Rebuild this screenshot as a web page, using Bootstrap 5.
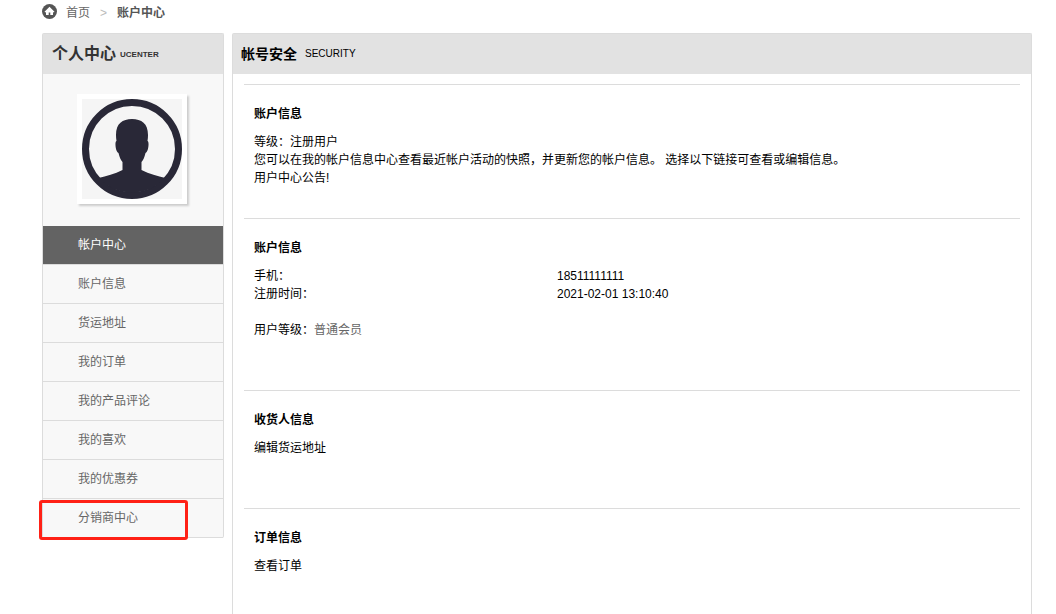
<!DOCTYPE html>
<html lang="zh-CN">
<head>
<meta charset="utf-8">
<meta name="viewport" content="width=device-width, initial-scale=1">
<title>账户中心</title>
<link href="https://cdn.jsdelivr.net/npm/bootstrap@5.3.0/dist/css/bootstrap.min.css" rel="stylesheet">
<style>
  :root { --line: #dcdcdc; --bar: #e2e2e2; --muted: #666; }
  body { font: 12px/18px "Liberation Sans", "Noto Sans CJK SC", sans-serif; color: #000; background: #fff; }
  a { color: var(--muted); text-decoration: none; }
  a:hover { text-decoration: underline; }
  .page { padding: 0 24px 0 42px; }
  .crumbs { height: 33px; padding-top: 4px; }
  .crumbs .breadcrumb { --bs-breadcrumb-divider-color: #bbb; --bs-breadcrumb-item-padding-x: 10px; --bs-breadcrumb-item-active-color: #555; margin-left: 9px; font-size: 12px; }
  .crumbs .breadcrumb-item::before { font-weight: 400; }
  .panel-bar { height: 41px; background: var(--bar); }
  .side { width: 182px; border: 1px solid var(--line); border-bottom: 0; border-radius: 2px; background: #f8f8f8; }
  .side .panel-bar { height: 40px; padding-left: 9px; color: #333; }
  .side h1 { font-size: 16px; line-height: 24px; }
  .side small { font-size: 8px; padding-top: 2px; }
  .avatar { width: 110px; height: 110px; margin: 20px 0 22px 34px; padding: 5px; background: #fff; box-shadow: 2px 2px 2px #ccc; }
  .menu a { height: 39px; padding-left: 35px; border-bottom: 1px solid var(--line); }
  .menu a.active { background: #636363; color: #fff; }
  .marked::after { content: ""; position: absolute; left: -4px; top: 1px; width: 149px; height: 40px; border: 3px solid #ff2116; border-radius: 3px; }
  .main-panel { border: 1px solid var(--line); border-bottom: 0; border-radius: 2px 2px 0 0; min-width: 0; }
  .main-panel .panel-bar { height: 40px; padding-left: 8px; }
  .main-panel h2 { font-size: 14px; line-height: 20px; }
  .main-panel .panel-bar span { font-size: 10px; }
  .blocks { padding: 10px 11px 0; }
  .block { border-top: 1px solid var(--line); padding: 20px 10px 51px; }
  .block.notice { padding-bottom: 31px; }
  .block:last-child { padding-bottom: 0; }
  .block h3 { font-size: 12px; line-height: 18px; margin-bottom: 10px; }
  .block p { margin: 0; }
  .facts { margin-bottom: 18px; }
  .facts th { width: 303px; padding: 0; font-weight: 400; }
  .facts td { padding: 0; }
</style>
</head>
<body>
<div class="page d-flex flex-column min-vh-100">
  <nav class="crumbs d-flex align-items-start" aria-label="breadcrumb">
    <svg class="flex-shrink-0" width="15" height="15" viewBox="0 0 15 15" aria-hidden="true">
      <circle cx="7.500" cy="7.500" r="7.500" fill="#555"/>
      <path d="M7.500 2.800 2.500 7.700l.8.8.7-.6V11h2.700V8.500h1.600V11H11V7.900l.7.6.8-.8Z" fill="#fff"/>
    </svg>
    <ol class="breadcrumb mb-0" style="--bs-breadcrumb-divider: '&gt;'">
      <li class="breadcrumb-item"><a href="#">首页</a></li>
      <li class="breadcrumb-item active fw-bold" aria-current="page">账户中心</li>
    </ol>
  </nav>

  <div class="d-flex flex-grow-1 gap-2">
    <aside class="side flex-shrink-0 align-self-start">
      <div class="panel-bar d-flex align-items-center gap-1">
        <h1 class="mb-0 fw-bold">个人中心</h1><small class="fw-bold">UCENTER</small>
      </div>
      <div class="avatar">
        <svg class="d-block" width="100" height="100" viewBox="0 0 100 100" role="img" aria-label="头像">
          <rect width="100" height="100" fill="#f5f5f5"/>
          <circle cx="50" cy="50" r="46.500" fill="none" stroke="#292837" stroke-width="7"/>
          <path d="M34.500 42C32 26 39 20 50 20s18 6 15.500 22c2 0 1 11-2 12-1 4-2 7-4 9v8c8 4 16 6 24 8a46 46 0 0 1-67 0c8-2 16-4 24-8v-8c-2-2-3-5-4-9-3-1-4-12-2-12Z" fill="#292837"/>
        </svg>
      </div>
      <nav class="menu d-flex flex-column">
        <a class="active d-flex align-items-center" aria-current="page" href="#">帐户中心</a>
        <a class="d-flex align-items-center" href="#">账户信息</a>
        <a class="d-flex align-items-center" href="#">货运地址</a>
        <a class="d-flex align-items-center" href="#">我的订单</a>
        <a class="d-flex align-items-center" href="#">我的产品评论</a>
        <a class="d-flex align-items-center" href="#">我的喜欢</a>
        <a class="d-flex align-items-center" href="#">我的优惠券</a>
        <a class="marked d-flex align-items-center position-relative" href="#">分销商中心</a>
      </nav>
    </aside>

    <main class="main-panel flex-grow-1">
      <div class="panel-bar d-flex align-items-center gap-2">
        <h2 class="mb-0 fw-bold">帐号安全</h2><span>SECURITY</span>
      </div>
      <div class="blocks">
        <section class="block notice">
          <h3 class="fw-bold">账户信息</h3>
          <p>等级：注册用户</p>
          <p>您可以在我的帐户信息中心查看最近帐户活动的快照，并更新您的帐户信息。 选择以下链接可查看或编辑信息。</p>
          <p>用户中心公告!</p>
        </section>
        <section class="block">
          <h3 class="fw-bold">账户信息</h3>
          <table class="facts w-100">
            <tbody>
              <tr><th scope="row">手机：</th><td>18511111111</td></tr>
              <tr><th scope="row">注册时间：</th><td>2021-02-01 13:10:40</td></tr>
            </tbody>
          </table>
          <p>用户等级：<a href="#">普通会员</a></p>
        </section>
        <section class="block">
          <h3 class="fw-bold">收货人信息</h3>
          <p><a class="text-black" href="#">编辑货运地址</a></p>
        </section>
        <section class="block">
          <h3 class="fw-bold">订单信息</h3>
          <p><a class="text-black" href="#">查看订单</a></p>
        </section>
      </div>
    </main>
  </div>
</div>
<script src="https://cdn.jsdelivr.net/npm/bootstrap@5.3.0/dist/js/bootstrap.bundle.min.js"></script>
</body>
</html>
